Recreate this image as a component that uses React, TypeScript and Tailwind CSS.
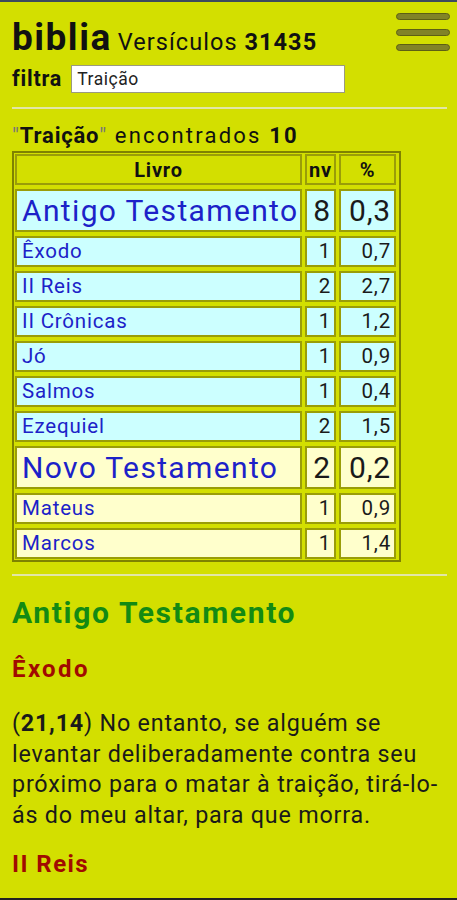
import React from 'react';

type Row = { livro: string; nv: string; pct: string; big?: boolean; nt?: boolean };

const rows: Row[] = [
  { livro: 'Antigo Testamento', nv: '8', pct: '0,3', big: true },
  { livro: 'Êxodo', nv: '1', pct: '0,7' },
  { livro: 'II Reis', nv: '2', pct: '2,7' },
  { livro: 'II Crônicas', nv: '1', pct: '1,2' },
  { livro: 'Jó', nv: '1', pct: '0,9' },
  { livro: 'Salmos', nv: '1', pct: '0,4' },
  { livro: 'Ezequiel', nv: '2', pct: '1,5' },
  { livro: 'Novo Testamento', nv: '2', pct: '0,2', big: true, nt: true },
  { livro: 'Mateus', nv: '1', pct: '0,9', nt: true },
  { livro: 'Marcos', nv: '1', pct: '1,4', nt: true },
];

function MenuIcon() {
  return (
    <div className="flex flex-col gap-[8.5px] pt-[11px] -mr-[3px]">
      <div className="w-[54px] h-[7px] rounded-full bg-[#818327] border border-[#5d5f14]" />
      <div className="w-[54px] h-[7px] rounded-full bg-[#818327] border border-[#5d5f14]" />
      <div className="w-[54px] h-[7px] rounded-full bg-[#818327] border border-[#5d5f14]" />
    </div>
  );
}

export default function App() {
  const cell = 'border-2 border-[#9a9d08] flex items-center';
  return (
    <div
      className="w-[457px] h-[900px] overflow-hidden bg-[#d3df00] text-[#111] flex flex-col tracking-[0.05em]"
      style={{ fontFamily: 'Roboto, "Liberation Sans", sans-serif' }}
    >
      <div className="h-[2px] bg-[#3c4a5e]" />

      <div className="pl-[12px] pr-[10px]">
        <div className="flex justify-between items-start">
          <div className="flex flex-col">
            <div className="flex items-baseline gap-[6px] mt-[14px]">
              <span className="text-[37px] font-bold leading-[44px] tracking-[0.04em]">biblia</span>
              <span className="text-[23.5px] leading-[28px] tracking-[0.045em]">
                Versículos <b>31435</b>
              </span>
            </div>
            <div className="flex items-center gap-[9px] mt-[3px]">
              <span className="text-[21.5px] font-bold">filtra</span>
              <div className="w-[274px] h-[28px] bg-white border border-[#9a9a80] flex items-center px-[5px] text-[17.5px] text-[#222] tracking-[0.03em]">
                Traição
              </div>
            </div>
          </div>
          <MenuIcon />
        </div>

        <div className="mt-[12px] border-t-2 border-[#e2e6a6]" />

        <div className="mt-[14px] text-[22px] leading-[26px]">
          <span className="text-[#777]">"</span>
          <b>Traição</b>
          <span className="text-[#777]">"</span>
          <span className="tracking-[0.1em]"> encontrados <b>10</b></span>
        </div>

        <div className="mt-[2px] w-[389px] border-2 border-[#7f8200] p-[1px]">
          <div className="grid grid-cols-[287px_31px_57px] gap-x-[3px] gap-y-[4px]">
            <div className={`${cell} h-[31px] justify-center text-[20px] font-bold`}>Livro</div>
            <div className={`${cell} h-[31px] justify-center text-[20px] font-bold`}>nv</div>
            <div className={`${cell} h-[31px] justify-center text-[20px] font-bold`}>%</div>
            {rows.map((r) => {
              const bg = r.nt ? 'bg-[#ffffcc]' : 'bg-[#ccffff]';
              const h = r.big ? 'h-[43px]' : 'h-[31px]';
              const size = r.big ? 'text-[30px]' : 'text-[20.5px]';
              return (
                <React.Fragment key={r.livro}>
                  <div
                    className={`${cell} ${bg} ${h} ${size} pl-[5px] whitespace-nowrap text-[#1c22c8] ${
                      r.big ? 'tracking-[0.045em]' : ''
                    }`}
                  >
                    {r.livro}
                  </div>
                  <div className={`${cell} ${bg} ${h} ${size} justify-end px-[3px] text-[#1a1a1a]`}>{r.nv}</div>
                  <div className={`${cell} ${bg} ${h} ${size} justify-end px-[3px] text-[#1a1a1a]`}>{r.pct}</div>
                </React.Fragment>
              );
            })}
          </div>
        </div>

        <div className="mt-[12px] border-t-2 border-[#e2e6a6]" />

        <div className="mt-[21px] text-[30px] font-bold text-[#138a13] leading-[32px] tracking-[0.055em]">Antigo Testamento</div>
        <div className="mt-[26px] text-[24px] font-bold text-[#a10b00] leading-[28px] tracking-[0.1em]">Êxodo</div>
        <div className="mt-[25px] text-[23.3px] leading-[30.5px] text-[#1a1a1a]">
          (<b>21,14</b>) No entanto, se alguém se levantar deliberadamente contra seu próximo para o matar à traição, tirá-lo-ás do meu altar, para que morra.
        </div>
        <div className="mt-[20px] text-[24px] font-bold text-[#a10b00] leading-[28px] tracking-[0.06em]">II Reis</div>
      </div>

      <div className="mt-auto h-[2px] bg-[#222]" />
    </div>
  );
}
